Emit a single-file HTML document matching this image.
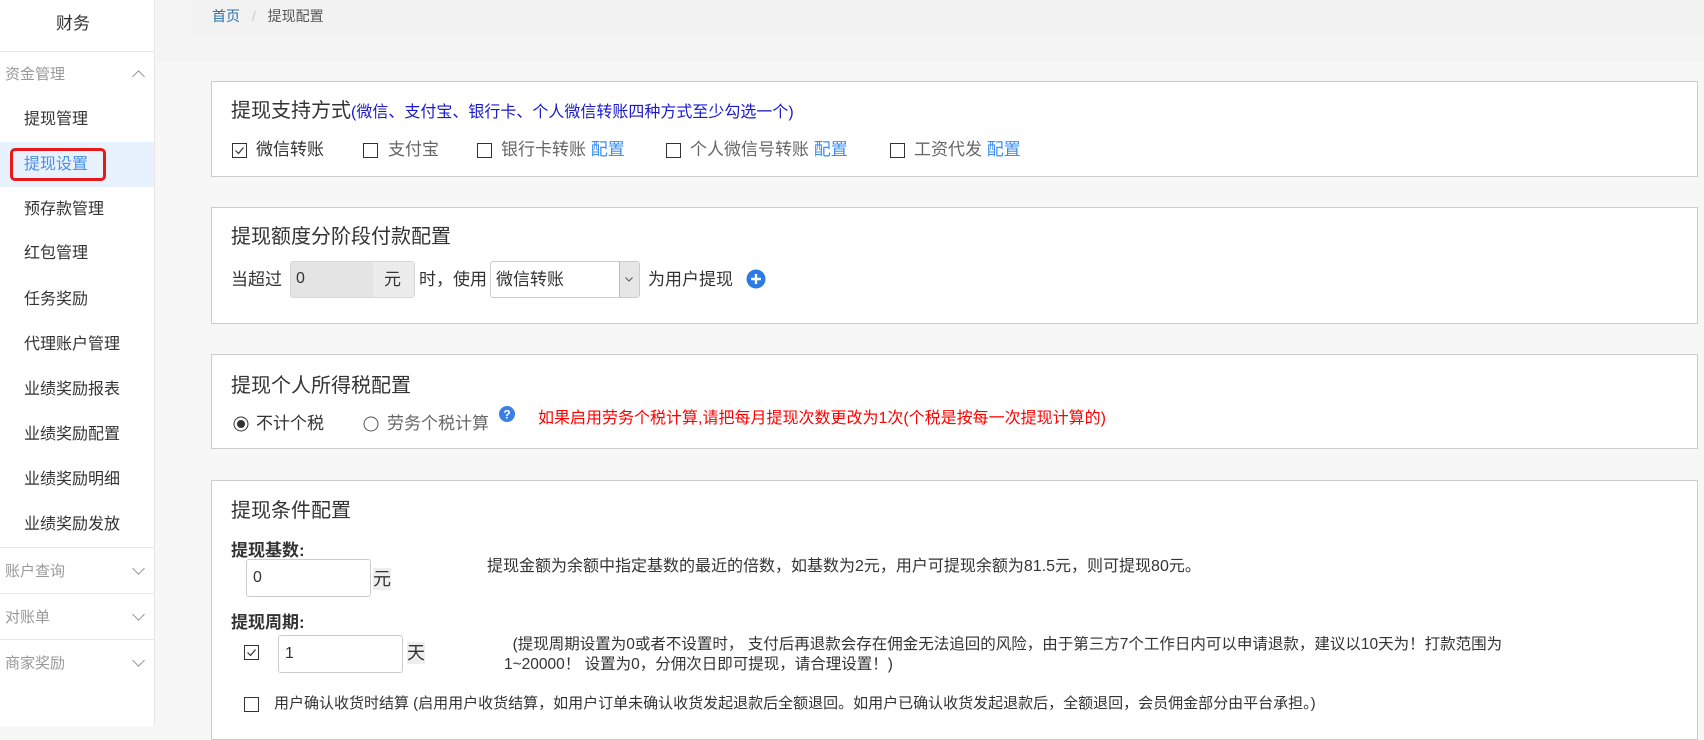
<!DOCTYPE html>
<html><head><meta charset="utf-8"><style>
*{margin:0;padding:0;box-sizing:border-box}
body{width:1704px;height:726px;overflow:hidden;background:#f7f7f7;font-family:"Liberation Sans","Noto Sans CJK SC",sans-serif;color:#333;position:relative}
.a{position:absolute;white-space:nowrap}
#side{position:absolute;left:0;top:0;width:155px;height:726px;background:#fff;border-right:1px solid #e6e6e6}
.it{position:absolute;left:24px;font-size:16px;color:#333;line-height:20px}
.hd{position:absolute;left:5px;font-size:15px;color:#999;line-height:20px}
.hr{position:absolute;left:0;width:154px;height:1px;background:#e6e6e6}
.chev{position:absolute;left:134px;width:9px;height:9px;border-left:1px solid #999;border-top:1px solid #999}
.card{position:absolute;left:211px;width:1487px;background:#fff;border:1px solid #ccc}
.t{font-size:20px;color:#333;line-height:28px}
.f17{font-size:17px;line-height:24px}
.cb{position:absolute;width:15px;height:15px;border:1px solid #333;background:#fff}
.lnk{color:#3a8ef6}
.inp{position:absolute;border:1px solid #ccc;border-radius:3px;background:#fff;font-size:16px;padding-left:6px}
</style></head><body>
<div id="side">
<div class="a" style="left:56px;top:9px;font-size:17px;color:#333">财务</div>
<div class="hr" style="top:51px"></div>
<div class="hd" style="top:65px">资金管理</div><div class="chev" style="top:72px;transform:rotate(45deg)"></div>
<div class="it" style="top:110px">提现管理</div>
<div style="position:absolute;left:0;top:142px;width:154px;height:45px;background:#e8f2fe"></div>
<div style="position:absolute;left:10px;top:148px;width:96px;height:33px;border:3px solid #e8191a;border-radius:5px"></div>
<div class="it" style="top:155px;color:#4a8ee8">提现设置</div>
<div class="it" style="top:200px">预存款管理</div>
<div class="it" style="top:244px">红包管理</div>
<div class="it" style="top:290px">任务奖励</div>
<div class="it" style="top:335px">代理账户管理</div>
<div class="it" style="top:380px">业绩奖励报表</div>
<div class="it" style="top:425px">业绩奖励配置</div>
<div class="it" style="top:470px">业绩奖励明细</div>
<div class="it" style="top:515px">业绩奖励发放</div>
<div class="hr" style="top:547px"></div>
<div class="hd" style="top:562px">账户查询</div><div class="chev" style="top:564px;transform:rotate(225deg)"></div>
<div class="hr" style="top:593px"></div>
<div class="hd" style="top:608px">对账单</div><div class="chev" style="top:610px;transform:rotate(225deg)"></div>
<div class="hr" style="top:639px"></div>
<div class="hd" style="top:654px">商家奖励</div><div class="chev" style="top:656px;transform:rotate(225deg)"></div>
</div>
<div style="position:absolute;left:156px;top:0;width:1548px;height:62px;background:#f4f4f4"></div>
<div style="position:absolute;left:193px;top:0;width:1511px;height:34px;background:#f2f2f2"></div>
<div class="a" style="left:212px;top:6px;font-size:14px;color:#2e6fa8">首页 <span style="color:#ccc;margin:0 8px">/</span> <span style="color:#555">提现配置</span></div>

<div class="card" style="top:81px;height:96px">
<div class="a t" style="left:19px;top:15px">提现支持方式<span style="font-size:16px;color:#1a1acc">(微信、支付宝、银行卡、个人微信转账四种方式至少勾选一个)</span></div>
<div class="cb" style="left:20px;top:61px"><svg width="13" height="13" style="position:absolute;left:0;top:0"><path d="M2.5 6.5l3 3 5-6" stroke="#333" stroke-width="1.2" fill="none"/></svg></div>
<div class="a f17" style="left:44px;top:56px;color:#333">微信转账</div>
<div class="cb" style="left:151px;top:61px"></div><div class="a f17" style="left:176px;top:56px;color:#666">支付宝</div>
<div class="cb" style="left:265px;top:61px"></div><div class="a f17" style="left:289px;top:56px;color:#666">银行卡转账 <span class="lnk">配置</span></div>
<div class="cb" style="left:454px;top:61px"></div><div class="a f17" style="left:478px;top:56px;color:#666">个人微信号转账 <span class="lnk">配置</span></div>
<div class="cb" style="left:678px;top:61px"></div><div class="a f17" style="left:702px;top:56px;color:#666">工资代发 <span class="lnk">配置</span></div>
</div>

<div class="card" style="top:207px;height:117px">
<div class="a t" style="left:19px;top:15px">提现额度分阶段付款配置</div>
<div class="a f17" style="left:19px;top:60px">当超过</div>
<div style="position:absolute;left:78px;top:53px;width:125px;height:37px;background:#e4e4e4;border:1px solid #d8d8d8;border-radius:3px"><span class="a" style="left:5px;top:8px;font-size:16px">0</span><div style="position:absolute;left:82px;top:0;width:41px;height:35px;background:#ececec"></div><span class="a f17" style="left:93px;top:6px">元</span></div>
<div class="a f17" style="left:207px;top:60px">时，使用</div>
<div style="position:absolute;left:278px;top:53px;width:150px;height:37px;border:1px solid #ccc;border-radius:3px;background:#fff"><span class="a f17" style="left:5px;top:6px">微信转账</span><div style="position:absolute;right:0;top:0;width:20px;height:35px;background:#e6e6e6;border-left:1px solid #bbb"></div><svg class="a" style="right:6px;top:15px" width="8" height="5"><path d="M0.5 0.5l3.5 3.5 3.5-3.5" stroke="#555" fill="none"/></svg></div>
<div class="a f17" style="left:436px;top:60px">为用户提现</div>
<svg class="a" style="left:534px;top:61px" width="20" height="20"><circle cx="10" cy="10" r="9.5" fill="#2c7be5"/><path d="M10 5v10M5 10h10" stroke="#fff" stroke-width="2.4"/></svg>
</div>

<div class="card" style="top:354px;height:95px">
<div class="a t" style="left:19px;top:17px">提现个人所得税配置</div>
<svg class="a" style="left:21px;top:61px" width="16" height="16"><circle cx="8" cy="8" r="7" fill="none" stroke="#333"/><circle cx="8" cy="8" r="4" fill="#333"/></svg>
<div class="a f17" style="left:44px;top:57px;color:#333">不计个税</div>
<svg class="a" style="left:151px;top:61px" width="16" height="16"><circle cx="8" cy="8" r="7" fill="none" stroke="#555"/></svg>
<div class="a f17" style="left:175px;top:57px;color:#666">劳务个税计算</div>
<svg class="a" style="left:287px;top:51px" width="16" height="16"><circle cx="8" cy="8" r="8" fill="#3a7fe6"/><text x="8" y="12.5" font-size="12" font-weight="bold" fill="#fff" text-anchor="middle" font-family="Liberation Sans">?</text></svg>
<div class="a" style="left:326px;top:52px;font-size:16px;line-height:24px;color:#f00">如果启用劳务个税计算,请把每月提现次数更改为1次(个税是按每一次提现计算的)</div>
</div>

<div class="card" style="top:480px;height:260px">
<div class="a t" style="left:19px;top:16px">提现条件配置</div>
<div class="a" style="left:19px;top:58px;font-size:17px;line-height:24px;font-weight:bold">提现基数:</div>
<div class="inp" style="left:34px;top:78px;width:125px;height:38px;line-height:36px">0</div>
<div class="a" style="left:161px;top:87px;background:#eee;font-size:18px;line-height:22px">元</div>
<div class="a" style="left:275px;top:74px;font-size:16px;line-height:24px">提现金额为余额中指定基数的最近的倍数，如基数为2元，用户可提现余额为81.5元，则可提现80元。</div>
<div class="a" style="left:19px;top:130px;font-size:17px;line-height:24px;font-weight:bold">提现周期:</div>
<div class="cb" style="left:32px;top:164px"><svg width="13" height="13" style="position:absolute;left:0;top:0"><path d="M2.5 6.5l3 3 5-6" stroke="#333" stroke-width="1.2" fill="none"/></svg></div>
<div class="inp" style="left:66px;top:154px;width:125px;height:38px;line-height:36px">1</div>
<div class="a" style="left:195px;top:161px;background:#eee;font-size:18px;line-height:22px">天</div>
<div class="a" style="left:292px;top:154px;font-size:15.5px;line-height:20px;white-space:nowrap">&nbsp;&nbsp;(提现周期设置为0或者不设置时， 支付后再退款会存在佣金无法追回的风险，由于第三方7个工作日内可以申请退款，建议以10天为！打款范围为<br>1~20000！ 设置为0，分佣次日即可提现，请合理设置！)</div>
<div class="cb" style="left:32px;top:216px"></div>
<div class="a" style="left:62px;top:213px;font-size:15px;line-height:20px">用户确认收货时结算 (启用用户收货结算，如用户订单未确认收货发起退款后全额退回。如用户已确认收货发起退款后，全额退回，会员佣金部分由平台承担。)</div>
</div>
</body></html>
